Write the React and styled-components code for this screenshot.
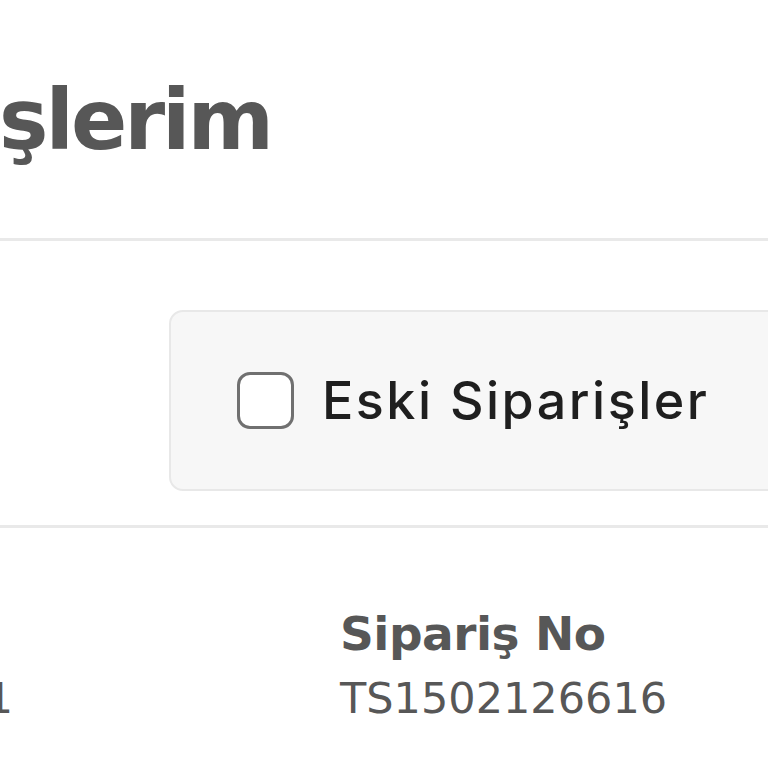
import React from "react";
import styled, { createGlobalStyle } from "styled-components";

const GlobalStyle = createGlobalStyle`
  html, body {
    margin: 0;
    padding: 0;
    background: #ffffff;
    overflow: hidden;
  }
  * {
    box-sizing: border-box;
  }
`;

const Page = styled.div`
  width: 768px;
  height: 768px;
  overflow: hidden;
  background: #ffffff;
  font-family: "DejaVu Sans", "Noto Sans", sans-serif;
`;

const TitleBar = styled.div`
  height: 238px;
  padding-top: 73px;
  white-space: nowrap;
`;

const Title = styled.h1`
  margin: 0 0 0 -256px;
  font-size: 83px;
  line-height: 96px;
  font-weight: 700;
  color: #575757;
  letter-spacing: -3px;
`;

const Divider = styled.div`
  height: 3px;
  background: #e9e9e9;
`;

const FilterRow = styled.div`
  height: 284px;
  padding: 69px 0 0 169px;
`;

const FilterBox = styled.label`
  width: 640px;
  height: 181px;
  display: flex;
  align-items: center;
  gap: 28px;
  padding-left: 66px;
  background: #f7f7f7;
  border: 2px solid #e8e8e8;
  border-radius: 14px;
  cursor: pointer;
`;

const CheckBox = styled.span`
  width: 57px;
  height: 57px;
  flex: none;
  background: #ffffff;
  border: 3px solid #707070;
  border-radius: 13px;
`;

const FilterText = styled.span`
  font-family: Inter, "Noto Sans", sans-serif;
  font-size: 52px;
  font-weight: 500;
  letter-spacing: 2.5px;
  color: #1f1f1f;
  white-space: nowrap;
`;

const InfoGrid = styled.div`
  display: grid;
  grid-template-columns: 353px 1fr;
  column-gap: 327px;
  padding-top: 78px;
  margin-left: -340px;
  white-space: nowrap;
`;

const InfoCell = styled.div`
  display: flex;
  flex-direction: column;
  align-items: flex-start;
  gap: 11px;
  color: #575757;
  justify-self: ${(p) => (p.$end ? "end" : "start")};
`;

const InfoLabel = styled.div`
  font-size: 47px;
  line-height: 56px;
  font-weight: 700;
  letter-spacing: -0.5px;
`;

const InfoValue = styled.div`
  font-size: 43px;
  line-height: 50px;
  font-weight: 400;
`;

export default function App() {
  return (
    <>
      <GlobalStyle />
      <Page>
        <TitleBar>
          <Title>Siparişlerim</Title>
        </TitleBar>
        <Divider />
        <FilterRow>
          <FilterBox>
            <CheckBox />
            <FilterText>Eski Siparişler</FilterText>
          </FilterBox>
        </FilterRow>
        <Divider />
        <InfoGrid>
          <InfoCell $end>
            <InfoLabel>Tarih</InfoLabel>
            <InfoValue>12.01.2021</InfoValue>
          </InfoCell>
          <InfoCell>
            <InfoLabel>Sipariş No</InfoLabel>
            <InfoValue>TS1502126616</InfoValue>
          </InfoCell>
        </InfoGrid>
      </Page>
    </>
  );
}
